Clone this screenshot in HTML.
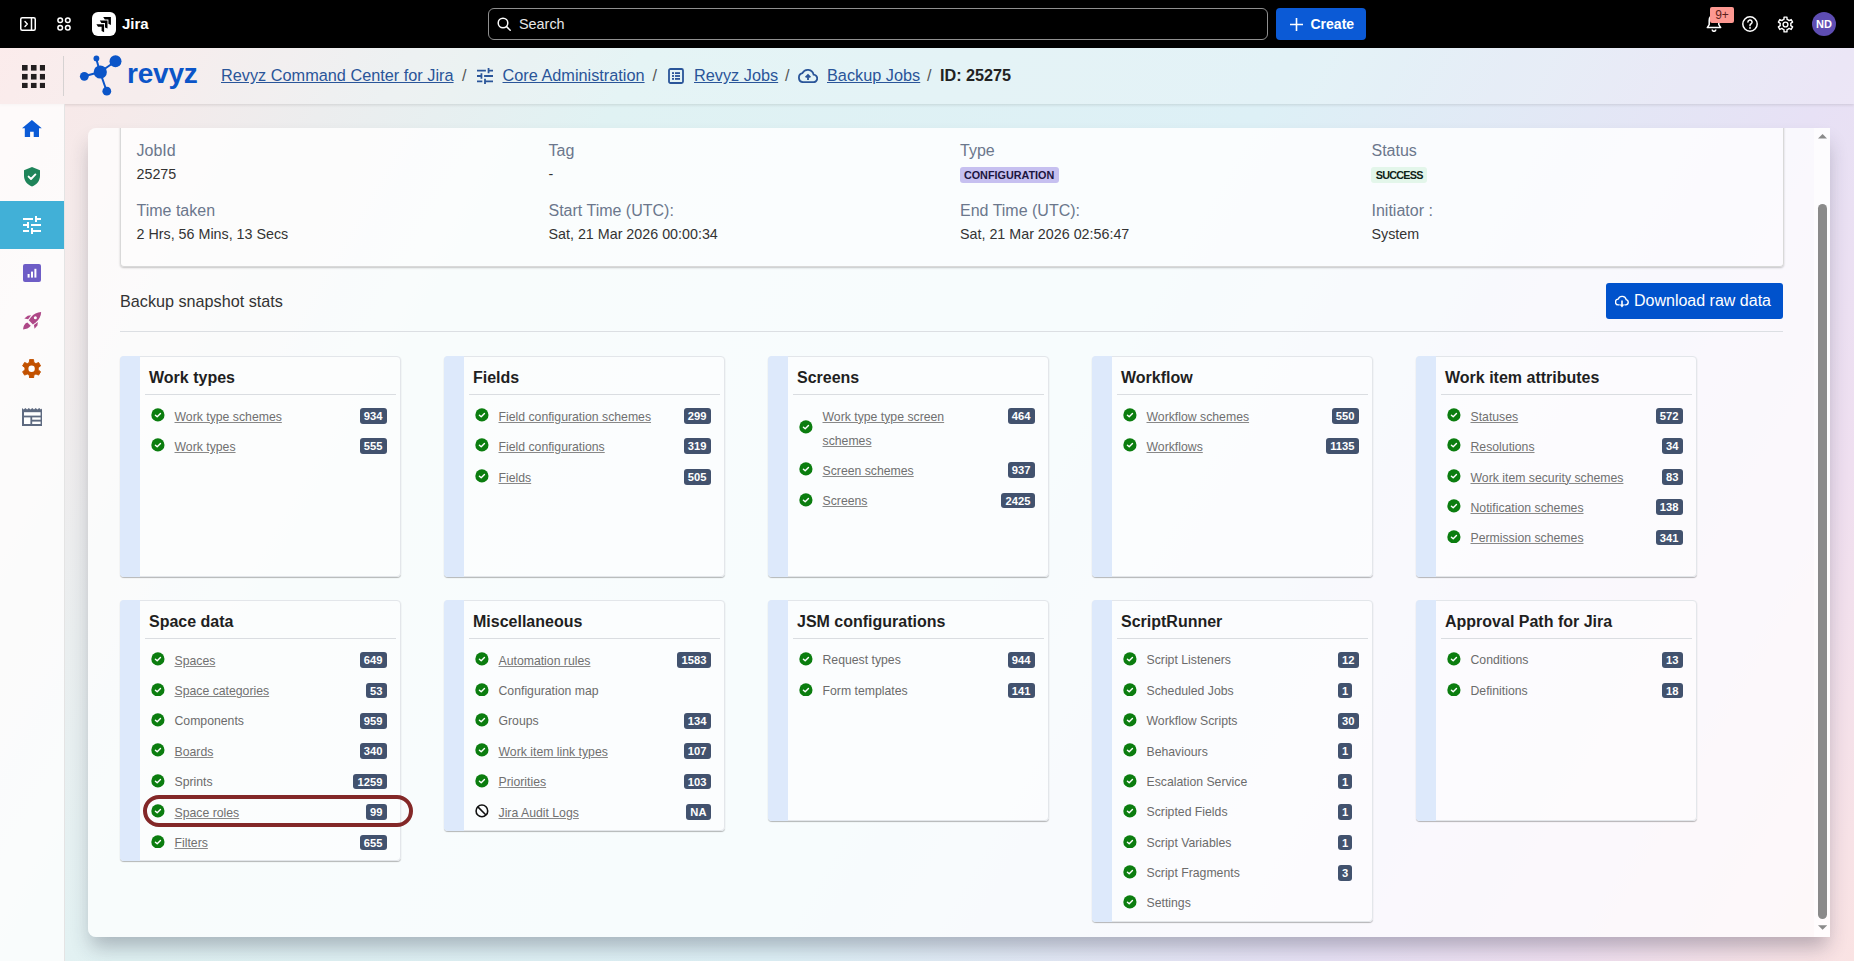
<!DOCTYPE html>
<html><head><meta charset="utf-8">
<style>
*{box-sizing:border-box;margin:0;padding:0}
html,body{width:1854px;height:961px;overflow:hidden}
body{position:relative;font-family:"Liberation Sans",sans-serif;color:#333;
background:linear-gradient(120deg,#fbe7e7 0%,#f5eaea 8%,#ecedee 16%,#e0f2f3 28%,#ddf0f6 55%,#e7e1f5 78%,#efdff0 88%,#fae3e3 100%);}
.abs{position:absolute}
/* top nav */
#top{position:absolute;left:0;top:0;width:1854px;height:48px;background:#000}
#top svg{position:absolute}
.jira{position:absolute;left:122px;top:15px;font-weight:bold;font-size:15px;color:#fff;letter-spacing:0px}
.search{position:absolute;left:488px;top:8px;width:780px;height:32px;border:1px solid #8f8f8f;border-radius:6px}
.search span{position:absolute;left:30px;top:6.7px;font-size:14.4px;color:#e8e8e8}
.create{position:absolute;left:1276px;top:8px;width:90px;height:32px;background:#0b5ad6;border-radius:4px}
.create span{position:absolute;left:34.5px;top:7.5px;font-size:14px;font-weight:bold;color:#fff}
.notif{position:absolute;left:1710px;top:7px;width:24px;height:16px;background:#fd9891;border-radius:2px;font-size:12px;color:#5d1f1a;text-align:center;line-height:16px}
.avatar{position:absolute;left:1812px;top:12px;width:24px;height:24px;border-radius:50%;background:#5e4db2;color:#fff;font-size:11px;font-weight:bold;text-align:center;line-height:24px}
/* app header */
#hdr{position:absolute;left:0;top:48px;width:1854px;height:56px;
background:rgba(255,255,255,.18);
box-shadow:0 1px 3px rgba(0,0,0,.12)}
.crumb{position:absolute;top:18.2px;font-size:16.3px;color:#2a5599;text-decoration:underline;text-underline-offset:0.5px;white-space:nowrap}
.sep{position:absolute;top:18.2px;font-size:16.2px;color:#555}
.idtxt{position:absolute;top:18.2px;font-size:16.2px;font-weight:bold;color:#222;white-space:nowrap}
/* sidebar */
#side{position:absolute;left:0;top:104px;width:65px;height:857px;background:rgba(255,255,255,.78);border-right:1px solid #e4e4e4}
#side svg{position:absolute}
.active{position:absolute;left:0;top:201px;width:64px;height:48px;background:#41b0d7}
/* panel */
.panel{position:absolute;left:88px;top:128px;width:1742px;height:809px;overflow:hidden;border-radius:8px 0 0 8px;
background:rgba(255,255,255,.76);box-shadow:0 13px 20px -3px rgba(40,40,60,.3)}
.inner{position:absolute;left:-88px;top:-128px;width:1854px;height:961px}
.det{position:absolute;left:119.5px;top:90px;width:1664px;height:177px;border:1px solid #d9d9d9;border-top:none;border-radius:4px;
background:rgba(255,255,255,.35);box-shadow:0 1px 2px rgba(0,0,0,.22)}
.lbl{position:absolute;font-size:16px;color:#6b778c;white-space:nowrap}
.val{position:absolute;font-size:14.3px;color:#333;white-space:nowrap}
.tag{position:absolute;font-weight:bold;border-radius:3px;white-space:nowrap}
.stats{position:absolute;left:120px;top:292.4px;font-size:16.2px;color:#333}
.dl{position:absolute;left:1606px;top:283px;width:177px;height:36px;background:#0052cc;border-radius:3px}
.dl span{position:absolute;left:28px;top:9px;color:#fff;font-size:16px}
.hr{position:absolute;left:120px;top:331px;width:1663px;height:1px;background:#dcdfe3}
/* cards */
.card{position:absolute;width:281px;min-height:220.5px;border:1px solid #e3e6ea;border-radius:4px;
background:rgba(255,255,255,.45);box-shadow:0 1px 1px rgba(0,0,0,.28);padding:0 0 3.6px 20px}
.card:before{content:"";position:absolute;left:-1px;top:-1px;bottom:-1px;width:20.3px;background:#dde9fb;border-radius:4px 0 0 4px}
.ct{height:38.3px;margin-left:4.5px;margin-right:4px;border-bottom:1px solid #dadde1;font-size:16px;font-weight:bold;color:#1f1f1f;padding:12.7px 0 0 4px;line-height:16px;white-space:nowrap}
.cl{padding-top:4.35px}
.it{position:relative;min-height:30.38px;padding:5.55px 0 0.75px 34px;line-height:24px;font-size:12.25px}
.it .ic{position:absolute;left:10.5px;top:8.45px;width:13.8px;height:13.8px}
.ml .ic{top:20.2px}
.lk{position:relative;top:-0.4px;color:#707070;text-decoration:underline;text-decoration-color:#888;text-underline-offset:1px;white-space:nowrap}
.pl{position:relative;top:-1px;color:#6b6b6b;white-space:nowrap}
.bw{position:absolute;right:12.9px;top:8.45px;min-width:20.8px;height:15.7px}.bd{display:inline-block;height:15.7px;line-height:17.2px;padding:0 4.15px;background:#42526e;color:#fff;border-radius:3px;font-size:11.2px;font-weight:bold;vertical-align:top}
.hl{position:absolute;left:143px;top:794.7px;width:270px;height:32px;border:4.6px solid #832828;border-radius:16px}
/* scrollbar */
.sbt{position:absolute;left:1818px;top:204px;width:9px;height:715px;background:#8a8a8a;border-radius:4.5px}
</style></head><body>

<div id="top">
 <svg style="left:20px;top:17px" width="16" height="14" viewBox="0 0 16 14"><rect x="0.75" y="0.75" width="14.5" height="12.5" rx="1.5" fill="none" stroke="#fff" stroke-width="1.5"/><path d="M11.5 1v12" stroke="#fff" stroke-width="1.5"/><path d="M5 4.6l2.3 2.4L5 9.4" fill="none" stroke="#fff" stroke-width="1.4" stroke-linecap="round" stroke-linejoin="round"/></svg>
 <svg style="left:57px;top:17px" width="14" height="14" viewBox="0 0 14 14"><g fill="none" stroke="#fff" stroke-width="1.5"><circle cx="3.2" cy="3.2" r="2.3"/><circle cx="10.8" cy="3.2" r="2.3"/><circle cx="3.2" cy="10.8" r="2.3"/><circle cx="10.8" cy="10.8" r="2.3"/></g></svg>
 <svg style="left:92px;top:12px" width="24" height="24" viewBox="0 0 24 24"><rect width="24" height="24" rx="6" fill="#fff"/><path d="M11.2 5H18.9V13L16.4 11.8V7.5H12.8Z" fill="#000"/><path d="M7.8 8.6H15.5V16.6L13 15.4V11.1H9.4Z" fill="#000"/><path d="M4.4 12.2H12.1V20.2L9.6 19V14.7H6Z" fill="#000"/></svg>
 <div class="jira">Jira</div>
 <div class="search">
  <svg style="left:8px;top:8px" width="15" height="15" viewBox="0 0 15 15"><circle cx="6" cy="6" r="4.8" fill="none" stroke="#fff" stroke-width="1.5"/><path d="M9.6 9.6l3.6 3.6" stroke="#fff" stroke-width="1.5" stroke-linecap="round"/></svg>
  <span>Search</span>
 </div>
 <div class="create">
  <svg style="left:12.5px;top:8.5px" width="15" height="15" viewBox="0 0 15 15"><path d="M7.5 1v13M1 7.5h13" stroke="#fff" stroke-width="1.6"/></svg>
  <span>Create</span>
 </div>
 <svg style="left:1706px;top:14px" width="16" height="18" viewBox="0 0 16 18"><path d="M8 1.5c-3 0-4.8 2.2-4.8 5v4.2L1.3 13.6h13.4l-1.9-2.9V6.5c0-2.8-1.8-5-4.8-5z" fill="none" stroke="#fff" stroke-width="1.5" stroke-linejoin="round"/><path d="M6.2 15.5a1.8 1.8 0 0 0 3.6 0" fill="none" stroke="#fff" stroke-width="1.5"/></svg>
 <div class="notif">9+</div>
 <svg style="left:1742px;top:16px" width="16" height="16" viewBox="0 0 16 16"><circle cx="8" cy="8" r="7.2" fill="none" stroke="#fff" stroke-width="1.5"/><path d="M5.9 6.1a2.1 2.1 0 1 1 3 1.9c-.6.3-.9.8-.9 1.4v.4" fill="none" stroke="#fff" stroke-width="1.5" stroke-linecap="round"/><circle cx="8" cy="11.9" r=".95" fill="#fff"/></svg>
 <svg style="left:1777px;top:16px" width="17" height="17" viewBox="0 0 24 24"><path d="M8.20 5.42 L9.78 4.73 L9.98 1.59 L14.02 1.59 L14.22 4.73 L15.80 5.42 L17.18 6.44 L20.00 5.05 L22.02 8.55 L19.41 10.29 L19.60 12.00 L19.41 13.71 L22.02 15.45 L20.00 18.95 L17.18 17.56 L15.80 18.58 L14.22 19.27 L14.02 22.41 L9.98 22.41 L9.78 19.27 L8.20 18.58 L6.82 17.56 L4.00 18.95 L1.98 15.45 L4.59 13.71 L4.40 12.00 L4.59 10.29 L1.98 8.55 L4.00 5.05 L6.82 6.44Z" fill="none" stroke="#fff" stroke-width="2" stroke-linejoin="round"/><circle cx="12" cy="12" r="3.4" fill="none" stroke="#fff" stroke-width="2"/></svg>
 <div class="avatar">ND</div>
</div>

<div id="hdr">
 <svg class="abs" style="left:21.5px;top:16.5px" width="23.5" height="23.5" viewBox="0 0 23.5 23.5"><g fill="#231f20"><rect x="0" y="0" width="5.6" height="5.6"/><rect x="8.95" y="0" width="5.6" height="5.6"/><rect x="17.9" y="0" width="5.6" height="5.6"/><rect x="0" y="8.95" width="5.6" height="5.6"/><rect x="8.95" y="8.95" width="5.6" height="5.6"/><rect x="17.9" y="8.95" width="5.6" height="5.6"/><rect x="0" y="17.9" width="5.6" height="5.6"/><rect x="8.95" y="17.9" width="5.6" height="5.6"/><rect x="17.9" y="17.9" width="5.6" height="5.6"/></g></svg>
 <div class="abs" style="left:63px;top:8px;width:1px;height:40px;background:#d6d2d2"></div>
 <svg class="abs" style="left:78px;top:6px" width="44" height="46" viewBox="78 54 44 46"><g stroke="#0b55c8" stroke-width="2"><line x1="100" y1="72" x2="96.2" y2="58.5"/><line x1="100" y1="72" x2="115.7" y2="61.2"/><line x1="100" y1="72" x2="84.2" y2="76.3"/><line x1="100" y1="72" x2="106.8" y2="91.5"/></g><g fill="#0b55c8"><circle cx="100.3" cy="72" r="6.6"/><circle cx="96.4" cy="58.4" r="2.9"/><circle cx="115.5" cy="61.3" r="6"/><circle cx="84.3" cy="76.3" r="4.4"/><circle cx="106.8" cy="91.2" r="4.4"/></g></svg>
 <div class="abs" style="left:127px;top:10px;font-size:28px;font-weight:bold;color:#0b55c8;letter-spacing:-0.2px">revyz</div>
 <div class="crumb" style="left:221px">Revyz Command Center for Jira</div>
 <div class="sep" style="left:462px">/</div>
 <svg class="abs" style="left:477px;top:20px" width="16" height="16" viewBox="3 3 18 18"><path d="M3 17v2h6v-2H3zM3 5v2h10V5H3zm10 16v-2h8v-2h-8v-2h-2v6h2zM7 9v2H3v2h4v2h2V9H7zm14 4v-2H11v2h10zm-6-4h2V7h4V5h-4V3h-2v6z" fill="#2a5599"/></svg>
 <div class="crumb" style="left:502.5px">Core Administration</div>
 <div class="sep" style="left:652.5px">/</div>
 <svg class="abs" style="left:668px;top:20px" width="16" height="16" viewBox="0 0 16 16"><rect x="1" y="1" width="14" height="14" rx="1.5" fill="none" stroke="#2a5599" stroke-width="1.8"/><g fill="#2a5599"><rect x="4" y="4.2" width="2" height="1.8"/><rect x="7" y="4.2" width="5" height="1.8"/><rect x="4" y="7.1" width="2" height="1.8"/><rect x="7" y="7.1" width="5" height="1.8"/><rect x="4" y="10" width="2" height="1.8"/><rect x="7" y="10" width="5" height="1.8"/></g></svg>
 <div class="crumb" style="left:694px">Revyz Jobs</div>
 <div class="sep" style="left:785px">/</div>
 <svg class="abs" style="left:798px;top:21px" width="20" height="14" viewBox="0 0 20 14"><path d="M15.6 5.6A6 6 0 0 0 4.4 4.2 4.6 4.6 0 0 0 4.8 13.2h10.4a3.8 3.8 0 0 0 .4-7.6z" fill="none" stroke="#2a5599" stroke-width="1.8"/><path d="M10 11V6.2M7.6 8.4L10 6l2.4 2.4" fill="none" stroke="#2a5599" stroke-width="1.8"/></svg>
 <div class="crumb" style="left:827px">Backup Jobs</div>
 <div class="sep" style="left:927px">/</div>
 <div class="idtxt" style="left:940px">ID: 25275</div>
</div>

<div id="side">
 <svg style="left:22.4px;top:16px" width="19.8" height="17" viewBox="0 0 24 21" preserveAspectRatio="none"><path d="M12 0L0 10.2h3.4V21h6.4v-6.6h4.4V21h6.4V10.2H24z" fill="#0b5ad6"/></svg>
 <svg style="left:24px;top:63px" width="16" height="19.5" viewBox="0 0 16 19.5"><path d="M8 0L0 3.2v5.6c0 5 3.4 9.2 8 10.7 4.6-1.5 8-5.7 8-10.7V3.2z" fill="#1f845a"/><path d="M4.6 9.6l2.4 2.4 4.4-4.6" fill="none" stroke="#fff" stroke-width="1.9" stroke-linecap="round" stroke-linejoin="round"/></svg>
 <div class="active" style="top:97px"></div>
 <svg style="left:23px;top:112px" width="18" height="18" viewBox="3 3 18 18"><path d="M3 17v2h6v-2H3zM3 5v2h10V5H3zm10 16v-2h8v-2h-8v-2h-2v6h2zM7 9v2H3v2h4v2h2V9H7zm14 4v-2H11v2h10zm-6-4h2V7h4V5h-4V3h-2v6z" fill="#fff"/></svg>
 <svg style="left:23px;top:160px" width="18" height="18" viewBox="0 0 18 18"><rect width="18" height="18" rx="2" fill="#6e5dc6"/><g fill="#fff"><rect x="4.6" y="10" width="2" height="3.6"/><rect x="8" y="7.6" width="2" height="6"/><rect x="11.4" y="4.8" width="2" height="8.8"/></g></svg>
 <svg style="left:21.7px;top:207px" width="20.3" height="20" viewBox="0 0 20 20"><path d="M19 1c-4 .2-7.6 1.8-10.2 5.2L6.6 9.2l4.2 4.2 3-2.2C17.2 8.6 18.8 5 19 1z" fill="#ae4787"/><circle cx="13.2" cy="6.8" r="1.5" fill="#fff"/><path d="M5.6 4.8L9 4.2 6 8.2 2.2 7.6z" fill="#ae4787"/><path d="M15.2 14.4L15.8 11 11.8 14l.6 3.8z" fill="#ae4787"/><path d="M5.2 11.4l3.4 3.4c-1.6 2.4-4.8 3.4-7.6 3.6.2-2.8 1.2-6 4.2-7z" fill="#ae4787"/></svg>
 <svg style="left:22.3px;top:254.8px" width="19.2" height="19.6" viewBox="0 0 24 24"><path d="M9.13 4.11 L9.55 0.46 L14.45 0.46 L14.87 4.11 L17.40 5.57 L20.77 4.10 L23.22 8.35 L20.27 10.54 L20.27 13.46 L23.22 15.65 L20.77 19.90 L17.40 18.43 L14.87 19.89 L14.45 23.54 L9.55 23.54 L9.13 19.89 L6.60 18.43 L3.23 19.90 L0.78 15.65 L3.73 13.46 L3.73 10.54 L0.78 8.35 L3.23 4.10 L6.60 5.57Z" fill="#c25100" stroke="#c25100" stroke-width="1.2" stroke-linejoin="round"/><circle cx="12" cy="12" r="4" fill="#fff"/></svg>
 <svg style="left:21.7px;top:303.7px" width="20.6" height="18" viewBox="0 0 20.6 18"><path d="M0 0l1.7 1.6L3.4 0l1.7 1.6L6.8 0l1.7 1.6L10.3 0 12 1.6 13.7 0l1.7 1.6L17.2 0l1.7 1.6L20.6 0v18H0z" fill="#5e6a80"/><rect x="2" y="4.2" width="16.6" height="3.4" fill="#fff"/><rect x="2" y="9.4" width="6.4" height="6.6" fill="#fff"/><rect x="10.2" y="9.4" width="8.4" height="2.3" fill="#fff"/><rect x="10.2" y="13.6" width="8.4" height="2.4" fill="#fff"/></svg>
</div>

<div class="panel"><div class="inner">
 <div class="det">
  <div class="lbl" style="left:16px;top:52px">JobId</div>
  <div class="val" style="left:16px;top:76px">25275</div>
  <div class="lbl" style="left:16px;top:112px">Time taken</div>
  <div class="val" style="left:16px;top:136px">2 Hrs, 56 Mins, 13 Secs</div>
  <div class="lbl" style="left:428px;top:52px">Tag</div>
  <div class="val" style="left:428px;top:76px">-</div>
  <div class="lbl" style="left:428px;top:112px">Start Time (UTC):</div>
  <div class="val" style="left:428px;top:136px">Sat, 21 Mar 2026 00:00:34</div>
  <div class="lbl" style="left:839.5px;top:52px">Type</div>
  <div class="tag" style="left:839.5px;top:77px;background:#c6c0f0;color:#1c1540;font-size:10.8px;padding:0 3.9px;width:98.7px;height:15.7px;line-height:16.6px">CONFIGURATION</div>
  <div class="lbl" style="left:839.5px;top:112px">End Time (UTC):</div>
  <div class="val" style="left:839.5px;top:136px">Sat, 21 Mar 2026 02:56:47</div>
  <div class="lbl" style="left:1251px;top:52px">Status</div>
  <div class="tag" style="left:1250.3px;top:77.3px;background:#e3f6ea;color:#0e2216;font-size:10.8px;letter-spacing:-0.75px;padding:0 4.9px;width:56px;height:15.6px;line-height:16.4px">SUCCESS</div>
  <div class="lbl" style="left:1251px;top:112px">Initiator :</div>
  <div class="val" style="left:1251px;top:136px">System</div>
 </div>
 <div class="stats">Backup snapshot stats</div>
 <div class="dl">
  <svg style="position:absolute;left:9px;top:12px" width="14" height="13" viewBox="0 0 14 13"><path d="M4.6 9.9H3.6A2.9 2.9 0 0 1 3.2 4.1 4.2 4.2 0 0 1 11.2 4.6 2.7 2.7 0 0 1 10.8 9.9H9.4" fill="none" stroke="#fff" stroke-width="1.4"/><path d="M7 5.6v5" stroke="#fff" stroke-width="1.6"/><path d="M4.6 9.4h4.8L7 12.4z" fill="#fff"/></svg>
  <span>Download raw data</span>
 </div>
 <div class="hr"></div>
<div class="card" style="left:119.5px;top:356px"><div class="ct">Work types</div><div class="cl"><div class="it"><svg class="ic" viewBox="0 0 14 14"><circle cx="7" cy="7" r="6.7" fill="#0b7d0f"/><path d="M4.5 7.3l1.8 1.6 3.3-3.3" fill="none" stroke="#fff" stroke-width="1.45" stroke-linecap="round" stroke-linejoin="round"/></svg><span class="lk">Work type schemes</span><span class="bw"><span class="bd">934</span></span></div><div class="it"><svg class="ic" viewBox="0 0 14 14"><circle cx="7" cy="7" r="6.7" fill="#0b7d0f"/><path d="M4.5 7.3l1.8 1.6 3.3-3.3" fill="none" stroke="#fff" stroke-width="1.45" stroke-linecap="round" stroke-linejoin="round"/></svg><span class="lk">Work types</span><span class="bw"><span class="bd">555</span></span></div></div></div>
<div class="card" style="left:443.5px;top:356px"><div class="ct">Fields</div><div class="cl"><div class="it"><svg class="ic" viewBox="0 0 14 14"><circle cx="7" cy="7" r="6.7" fill="#0b7d0f"/><path d="M4.5 7.3l1.8 1.6 3.3-3.3" fill="none" stroke="#fff" stroke-width="1.45" stroke-linecap="round" stroke-linejoin="round"/></svg><span class="lk">Field configuration schemes</span><span class="bw"><span class="bd">299</span></span></div><div class="it"><svg class="ic" viewBox="0 0 14 14"><circle cx="7" cy="7" r="6.7" fill="#0b7d0f"/><path d="M4.5 7.3l1.8 1.6 3.3-3.3" fill="none" stroke="#fff" stroke-width="1.45" stroke-linecap="round" stroke-linejoin="round"/></svg><span class="lk">Field configurations</span><span class="bw"><span class="bd">319</span></span></div><div class="it"><svg class="ic" viewBox="0 0 14 14"><circle cx="7" cy="7" r="6.7" fill="#0b7d0f"/><path d="M4.5 7.3l1.8 1.6 3.3-3.3" fill="none" stroke="#fff" stroke-width="1.45" stroke-linecap="round" stroke-linejoin="round"/></svg><span class="lk">Fields</span><span class="bw"><span class="bd">505</span></span></div></div></div>
<div class="card" style="left:767.5px;top:356px"><div class="ct">Screens</div><div class="cl"><div class="it ml"><svg class="ic" viewBox="0 0 14 14"><circle cx="7" cy="7" r="6.7" fill="#0b7d0f"/><path d="M4.5 7.3l1.8 1.6 3.3-3.3" fill="none" stroke="#fff" stroke-width="1.45" stroke-linecap="round" stroke-linejoin="round"/></svg><span class="lk">Work type type screen<br>schemes</span><span class="bw"><span class="bd">464</span></span></div><div class="it"><svg class="ic" viewBox="0 0 14 14"><circle cx="7" cy="7" r="6.7" fill="#0b7d0f"/><path d="M4.5 7.3l1.8 1.6 3.3-3.3" fill="none" stroke="#fff" stroke-width="1.45" stroke-linecap="round" stroke-linejoin="round"/></svg><span class="lk">Screen schemes</span><span class="bw"><span class="bd">937</span></span></div><div class="it"><svg class="ic" viewBox="0 0 14 14"><circle cx="7" cy="7" r="6.7" fill="#0b7d0f"/><path d="M4.5 7.3l1.8 1.6 3.3-3.3" fill="none" stroke="#fff" stroke-width="1.45" stroke-linecap="round" stroke-linejoin="round"/></svg><span class="lk">Screens</span><span class="bw"><span class="bd">2425</span></span></div></div></div>
<div class="card" style="left:1091.5px;top:356px"><div class="ct">Workflow</div><div class="cl"><div class="it"><svg class="ic" viewBox="0 0 14 14"><circle cx="7" cy="7" r="6.7" fill="#0b7d0f"/><path d="M4.5 7.3l1.8 1.6 3.3-3.3" fill="none" stroke="#fff" stroke-width="1.45" stroke-linecap="round" stroke-linejoin="round"/></svg><span class="lk">Workflow schemes</span><span class="bw"><span class="bd">550</span></span></div><div class="it"><svg class="ic" viewBox="0 0 14 14"><circle cx="7" cy="7" r="6.7" fill="#0b7d0f"/><path d="M4.5 7.3l1.8 1.6 3.3-3.3" fill="none" stroke="#fff" stroke-width="1.45" stroke-linecap="round" stroke-linejoin="round"/></svg><span class="lk">Workflows</span><span class="bw"><span class="bd">1135</span></span></div></div></div>
<div class="card" style="left:1415.5px;top:356px"><div class="ct">Work item attributes</div><div class="cl"><div class="it"><svg class="ic" viewBox="0 0 14 14"><circle cx="7" cy="7" r="6.7" fill="#0b7d0f"/><path d="M4.5 7.3l1.8 1.6 3.3-3.3" fill="none" stroke="#fff" stroke-width="1.45" stroke-linecap="round" stroke-linejoin="round"/></svg><span class="lk">Statuses</span><span class="bw"><span class="bd">572</span></span></div><div class="it"><svg class="ic" viewBox="0 0 14 14"><circle cx="7" cy="7" r="6.7" fill="#0b7d0f"/><path d="M4.5 7.3l1.8 1.6 3.3-3.3" fill="none" stroke="#fff" stroke-width="1.45" stroke-linecap="round" stroke-linejoin="round"/></svg><span class="lk">Resolutions</span><span class="bw"><span class="bd">34</span></span></div><div class="it"><svg class="ic" viewBox="0 0 14 14"><circle cx="7" cy="7" r="6.7" fill="#0b7d0f"/><path d="M4.5 7.3l1.8 1.6 3.3-3.3" fill="none" stroke="#fff" stroke-width="1.45" stroke-linecap="round" stroke-linejoin="round"/></svg><span class="lk">Work item security schemes</span><span class="bw"><span class="bd">83</span></span></div><div class="it"><svg class="ic" viewBox="0 0 14 14"><circle cx="7" cy="7" r="6.7" fill="#0b7d0f"/><path d="M4.5 7.3l1.8 1.6 3.3-3.3" fill="none" stroke="#fff" stroke-width="1.45" stroke-linecap="round" stroke-linejoin="round"/></svg><span class="lk">Notification schemes</span><span class="bw"><span class="bd">138</span></span></div><div class="it"><svg class="ic" viewBox="0 0 14 14"><circle cx="7" cy="7" r="6.7" fill="#0b7d0f"/><path d="M4.5 7.3l1.8 1.6 3.3-3.3" fill="none" stroke="#fff" stroke-width="1.45" stroke-linecap="round" stroke-linejoin="round"/></svg><span class="lk">Permission schemes</span><span class="bw"><span class="bd">341</span></span></div></div></div>
<div class="card" style="left:119.5px;top:600.2px"><div class="ct">Space data</div><div class="cl"><div class="it"><svg class="ic" viewBox="0 0 14 14"><circle cx="7" cy="7" r="6.7" fill="#0b7d0f"/><path d="M4.5 7.3l1.8 1.6 3.3-3.3" fill="none" stroke="#fff" stroke-width="1.45" stroke-linecap="round" stroke-linejoin="round"/></svg><span class="lk">Spaces</span><span class="bw"><span class="bd">649</span></span></div><div class="it"><svg class="ic" viewBox="0 0 14 14"><circle cx="7" cy="7" r="6.7" fill="#0b7d0f"/><path d="M4.5 7.3l1.8 1.6 3.3-3.3" fill="none" stroke="#fff" stroke-width="1.45" stroke-linecap="round" stroke-linejoin="round"/></svg><span class="lk">Space categories</span><span class="bw"><span class="bd">53</span></span></div><div class="it"><svg class="ic" viewBox="0 0 14 14"><circle cx="7" cy="7" r="6.7" fill="#0b7d0f"/><path d="M4.5 7.3l1.8 1.6 3.3-3.3" fill="none" stroke="#fff" stroke-width="1.45" stroke-linecap="round" stroke-linejoin="round"/></svg><span class="pl">Components</span><span class="bw"><span class="bd">959</span></span></div><div class="it"><svg class="ic" viewBox="0 0 14 14"><circle cx="7" cy="7" r="6.7" fill="#0b7d0f"/><path d="M4.5 7.3l1.8 1.6 3.3-3.3" fill="none" stroke="#fff" stroke-width="1.45" stroke-linecap="round" stroke-linejoin="round"/></svg><span class="lk">Boards</span><span class="bw"><span class="bd">340</span></span></div><div class="it"><svg class="ic" viewBox="0 0 14 14"><circle cx="7" cy="7" r="6.7" fill="#0b7d0f"/><path d="M4.5 7.3l1.8 1.6 3.3-3.3" fill="none" stroke="#fff" stroke-width="1.45" stroke-linecap="round" stroke-linejoin="round"/></svg><span class="pl">Sprints</span><span class="bw"><span class="bd">1259</span></span></div><div class="it"><svg class="ic" viewBox="0 0 14 14"><circle cx="7" cy="7" r="6.7" fill="#0b7d0f"/><path d="M4.5 7.3l1.8 1.6 3.3-3.3" fill="none" stroke="#fff" stroke-width="1.45" stroke-linecap="round" stroke-linejoin="round"/></svg><span class="lk">Space roles</span><span class="bw"><span class="bd">99</span></span></div><div class="it"><svg class="ic" viewBox="0 0 14 14"><circle cx="7" cy="7" r="6.7" fill="#0b7d0f"/><path d="M4.5 7.3l1.8 1.6 3.3-3.3" fill="none" stroke="#fff" stroke-width="1.45" stroke-linecap="round" stroke-linejoin="round"/></svg><span class="lk">Filters</span><span class="bw"><span class="bd">655</span></span></div></div></div>
<div class="card" style="left:443.5px;top:600.2px"><div class="ct">Miscellaneous</div><div class="cl"><div class="it"><svg class="ic" viewBox="0 0 14 14"><circle cx="7" cy="7" r="6.7" fill="#0b7d0f"/><path d="M4.5 7.3l1.8 1.6 3.3-3.3" fill="none" stroke="#fff" stroke-width="1.45" stroke-linecap="round" stroke-linejoin="round"/></svg><span class="lk">Automation rules</span><span class="bw"><span class="bd">1583</span></span></div><div class="it"><svg class="ic" viewBox="0 0 14 14"><circle cx="7" cy="7" r="6.7" fill="#0b7d0f"/><path d="M4.5 7.3l1.8 1.6 3.3-3.3" fill="none" stroke="#fff" stroke-width="1.45" stroke-linecap="round" stroke-linejoin="round"/></svg><span class="pl">Configuration map</span></div><div class="it"><svg class="ic" viewBox="0 0 14 14"><circle cx="7" cy="7" r="6.7" fill="#0b7d0f"/><path d="M4.5 7.3l1.8 1.6 3.3-3.3" fill="none" stroke="#fff" stroke-width="1.45" stroke-linecap="round" stroke-linejoin="round"/></svg><span class="pl">Groups</span><span class="bw"><span class="bd">134</span></span></div><div class="it"><svg class="ic" viewBox="0 0 14 14"><circle cx="7" cy="7" r="6.7" fill="#0b7d0f"/><path d="M4.5 7.3l1.8 1.6 3.3-3.3" fill="none" stroke="#fff" stroke-width="1.45" stroke-linecap="round" stroke-linejoin="round"/></svg><span class="lk">Work item link types</span><span class="bw"><span class="bd">107</span></span></div><div class="it"><svg class="ic" viewBox="0 0 14 14"><circle cx="7" cy="7" r="6.7" fill="#0b7d0f"/><path d="M4.5 7.3l1.8 1.6 3.3-3.3" fill="none" stroke="#fff" stroke-width="1.45" stroke-linecap="round" stroke-linejoin="round"/></svg><span class="lk">Priorities</span><span class="bw"><span class="bd">103</span></span></div><div class="it"><svg class="ic" viewBox="0 0 14 14"><circle cx="7" cy="7" r="5.9" fill="none" stroke="#111" stroke-width="1.6"/><path d="M2.9 2.9l8.2 8.2" stroke="#111" stroke-width="1.6"/></svg><span class="lk">Jira Audit Logs</span><span class="bw"><span class="bd">NA</span></span></div></div></div>
<div class="card" style="left:767.5px;top:600.2px"><div class="ct">JSM configurations</div><div class="cl"><div class="it"><svg class="ic" viewBox="0 0 14 14"><circle cx="7" cy="7" r="6.7" fill="#0b7d0f"/><path d="M4.5 7.3l1.8 1.6 3.3-3.3" fill="none" stroke="#fff" stroke-width="1.45" stroke-linecap="round" stroke-linejoin="round"/></svg><span class="pl">Request types</span><span class="bw"><span class="bd">944</span></span></div><div class="it"><svg class="ic" viewBox="0 0 14 14"><circle cx="7" cy="7" r="6.7" fill="#0b7d0f"/><path d="M4.5 7.3l1.8 1.6 3.3-3.3" fill="none" stroke="#fff" stroke-width="1.45" stroke-linecap="round" stroke-linejoin="round"/></svg><span class="pl">Form templates</span><span class="bw"><span class="bd">141</span></span></div></div></div>
<div class="card" style="left:1091.5px;top:600.2px"><div class="ct">ScriptRunner</div><div class="cl"><div class="it"><svg class="ic" viewBox="0 0 14 14"><circle cx="7" cy="7" r="6.7" fill="#0b7d0f"/><path d="M4.5 7.3l1.8 1.6 3.3-3.3" fill="none" stroke="#fff" stroke-width="1.45" stroke-linecap="round" stroke-linejoin="round"/></svg><span class="pl">Script Listeners</span><span class="bw"><span class="bd">12</span></span></div><div class="it"><svg class="ic" viewBox="0 0 14 14"><circle cx="7" cy="7" r="6.7" fill="#0b7d0f"/><path d="M4.5 7.3l1.8 1.6 3.3-3.3" fill="none" stroke="#fff" stroke-width="1.45" stroke-linecap="round" stroke-linejoin="round"/></svg><span class="pl">Scheduled Jobs</span><span class="bw"><span class="bd">1</span></span></div><div class="it"><svg class="ic" viewBox="0 0 14 14"><circle cx="7" cy="7" r="6.7" fill="#0b7d0f"/><path d="M4.5 7.3l1.8 1.6 3.3-3.3" fill="none" stroke="#fff" stroke-width="1.45" stroke-linecap="round" stroke-linejoin="round"/></svg><span class="pl">Workflow Scripts</span><span class="bw"><span class="bd">30</span></span></div><div class="it"><svg class="ic" viewBox="0 0 14 14"><circle cx="7" cy="7" r="6.7" fill="#0b7d0f"/><path d="M4.5 7.3l1.8 1.6 3.3-3.3" fill="none" stroke="#fff" stroke-width="1.45" stroke-linecap="round" stroke-linejoin="round"/></svg><span class="pl">Behaviours</span><span class="bw"><span class="bd">1</span></span></div><div class="it"><svg class="ic" viewBox="0 0 14 14"><circle cx="7" cy="7" r="6.7" fill="#0b7d0f"/><path d="M4.5 7.3l1.8 1.6 3.3-3.3" fill="none" stroke="#fff" stroke-width="1.45" stroke-linecap="round" stroke-linejoin="round"/></svg><span class="pl">Escalation Service</span><span class="bw"><span class="bd">1</span></span></div><div class="it"><svg class="ic" viewBox="0 0 14 14"><circle cx="7" cy="7" r="6.7" fill="#0b7d0f"/><path d="M4.5 7.3l1.8 1.6 3.3-3.3" fill="none" stroke="#fff" stroke-width="1.45" stroke-linecap="round" stroke-linejoin="round"/></svg><span class="pl">Scripted Fields</span><span class="bw"><span class="bd">1</span></span></div><div class="it"><svg class="ic" viewBox="0 0 14 14"><circle cx="7" cy="7" r="6.7" fill="#0b7d0f"/><path d="M4.5 7.3l1.8 1.6 3.3-3.3" fill="none" stroke="#fff" stroke-width="1.45" stroke-linecap="round" stroke-linejoin="round"/></svg><span class="pl">Script Variables</span><span class="bw"><span class="bd">1</span></span></div><div class="it"><svg class="ic" viewBox="0 0 14 14"><circle cx="7" cy="7" r="6.7" fill="#0b7d0f"/><path d="M4.5 7.3l1.8 1.6 3.3-3.3" fill="none" stroke="#fff" stroke-width="1.45" stroke-linecap="round" stroke-linejoin="round"/></svg><span class="pl">Script Fragments</span><span class="bw"><span class="bd">3</span></span></div><div class="it"><svg class="ic" viewBox="0 0 14 14"><circle cx="7" cy="7" r="6.7" fill="#0b7d0f"/><path d="M4.5 7.3l1.8 1.6 3.3-3.3" fill="none" stroke="#fff" stroke-width="1.45" stroke-linecap="round" stroke-linejoin="round"/></svg><span class="pl">Settings</span></div></div></div>
<div class="card" style="left:1415.5px;top:600.2px"><div class="ct">Approval Path for Jira</div><div class="cl"><div class="it"><svg class="ic" viewBox="0 0 14 14"><circle cx="7" cy="7" r="6.7" fill="#0b7d0f"/><path d="M4.5 7.3l1.8 1.6 3.3-3.3" fill="none" stroke="#fff" stroke-width="1.45" stroke-linecap="round" stroke-linejoin="round"/></svg><span class="pl">Conditions</span><span class="bw"><span class="bd">13</span></span></div><div class="it"><svg class="ic" viewBox="0 0 14 14"><circle cx="7" cy="7" r="6.7" fill="#0b7d0f"/><path d="M4.5 7.3l1.8 1.6 3.3-3.3" fill="none" stroke="#fff" stroke-width="1.45" stroke-linecap="round" stroke-linejoin="round"/></svg><span class="pl">Definitions</span><span class="bw"><span class="bd">18</span></span></div></div></div>
 <div class="hl"></div>
 <div class="abs" style="left:1814px;top:128px;width:16px;height:809px;background:rgba(255,255,255,.6)"></div>
 <svg class="abs" style="left:1818px;top:134.4px" width="9.2" height="4.6" viewBox="0 0 10 5"><path d="M0 5L5 0l5 5z" fill="#8a8a8a"/></svg>
 <div class="sbt"></div>
 <svg class="abs" style="left:1818px;top:925.2px" width="9.2" height="5" viewBox="0 0 10 5"><path d="M0 0h10L5 5z" fill="#8a8a8a"/></svg>
</div></div>
</body></html>
